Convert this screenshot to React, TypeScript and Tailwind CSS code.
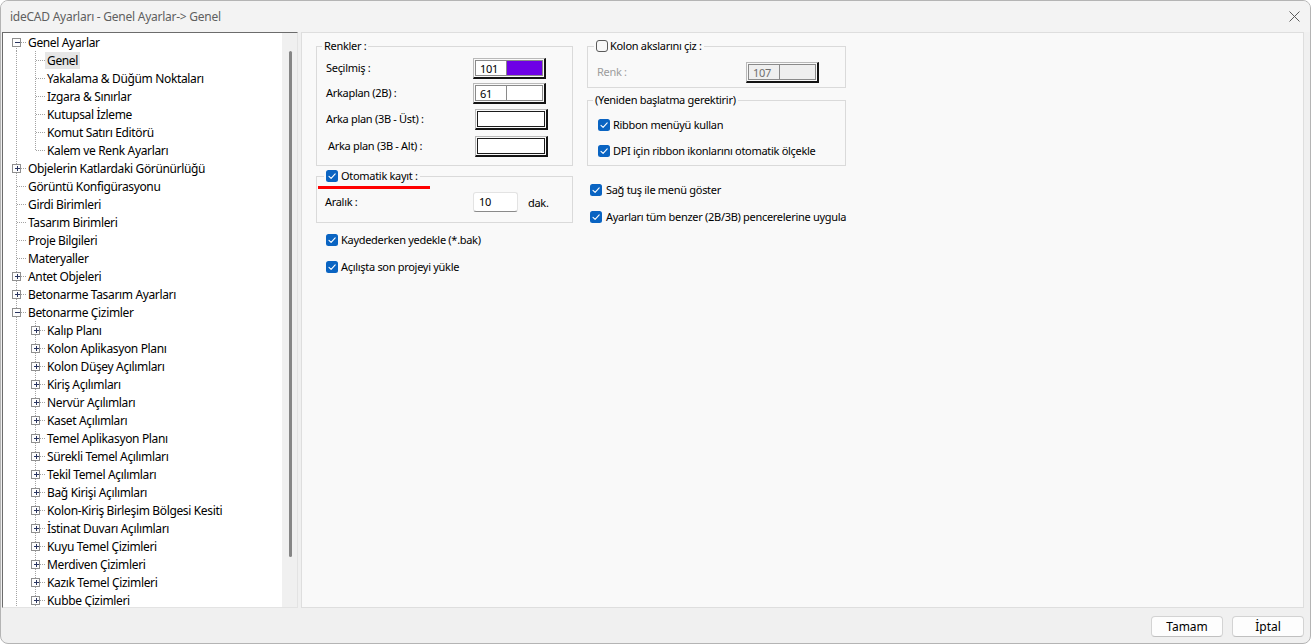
import React from "react";

type Node = {
  label: string;
  level: 0 | 1;
  box?: "+" | "-";
  selected?: boolean;
  first?: boolean;
  lastChild?: boolean;
};

const CHILDREN_1 = [
  "Genel",
  "Yakalama & Düğüm Noktaları",
  "Izgara & Sınırlar",
  "Kutupsal İzleme",
  "Komut Satırı Editörü",
  "Kalem ve Renk Ayarları",
];

const CHILDREN_2 = [
  "Kalıp Planı",
  "Kolon Aplikasyon Planı",
  "Kolon Düşey Açılımları",
  "Kiriş Açılımları",
  "Nervür Açılımları",
  "Kaset Açılımları",
  "Temel Aplikasyon Planı",
  "Sürekli Temel Açılımları",
  "Tekil Temel Açılımları",
  "Bağ Kirişi Açılımları",
  "Kolon-Kiriş Birleşim Bölgesi Kesiti",
  "İstinat Duvarı Açılımları",
  "Kuyu Temel Çizimleri",
  "Merdiven Çizimleri",
  "Kazık Temel Çizimleri",
  "Kubbe Çizimleri",
];

const TREE: Node[] = [
  { label: "Genel Ayarlar", level: 0, box: "-", first: true },
  ...CHILDREN_1.map((label, i) => ({
    label,
    level: 1 as const,
    selected: i === 0,
    lastChild: i === CHILDREN_1.length - 1,
  })),
  { label: "Objelerin Katlardaki Görünürlüğü", level: 0, box: "+" },
  { label: "Görüntü Konfigürasyonu", level: 0 },
  { label: "Girdi Birimleri", level: 0 },
  { label: "Tasarım Birimleri", level: 0 },
  { label: "Proje Bilgileri", level: 0 },
  { label: "Materyaller", level: 0 },
  { label: "Antet Objeleri", level: 0, box: "+" },
  { label: "Betonarme Tasarım Ayarları", level: 0, box: "+" },
  { label: "Betonarme Çizimler", level: 0, box: "-" },
  ...CHILDREN_2.map((label) => ({ label, level: 1 as const, box: "+" as const })),
];

function Expander({ cx, sign }: { cx: number; sign: "+" | "-" }) {
  return (
    <g shapeRendering="crispEdges">
      <rect x={cx - 4} y={5.5} width={8} height={8} fill="#fdfdfd" stroke="#8f8f8f" />
      <line x1={cx - 2} y1={9.5} x2={cx + 3} y2={9.5} stroke="#2a3560" />
      {sign === "+" && <line x1={cx + 0.5} y1={7} x2={cx + 0.5} y2={12} stroke="#2a3560" />}
    </g>
  );
}

function Connector({ node }: { node: Node }) {
  const w = node.level === 0 ? 23 : 42;
  return (
    <svg width={w} height={18} className="shrink-0">
      <g stroke="#a3a3a3" strokeDasharray="1 1" shapeRendering="crispEdges">
        <line x1={13.5} y1={node.first ? 9 : 0} x2={13.5} y2={18} />
        {node.level === 0 ? (
          <line x1={14} y1={9.5} x2={23} y2={9.5} />
        ) : (
          <>
            <line x1={32.5} y1={0} x2={32.5} y2={node.lastChild ? 10 : 18} />
            <line x1={33} y1={9.5} x2={42} y2={9.5} />
          </>
        )}
      </g>
      {node.box && <Expander cx={node.level === 0 ? 13.5 : 32.5} sign={node.box} />}
    </svg>
  );
}

function Check({ checked = true }: { checked?: boolean }) {
  if (!checked) {
    return <span className="w-[12px] h-[12px] shrink-0 rounded-[3px] border border-[#5a5a5a] bg-[#f7f7f7]" />;
  }
  return (
    <svg width={12} height={12} className="shrink-0">
      <rect x={0} y={0} width={12} height={12} rx={2.5} fill="#0a64c2" />
      <path d="M3 6.3 L5.1 8.3 L9.2 3.9" fill="none" stroke="#fff" strokeWidth={1.1} strokeLinecap="round" strokeLinejoin="round" />
    </svg>
  );
}

function CheckRow({ label, className = "" }: { label: string; className?: string }) {
  return (
    <div className={`h-[18px] flex items-center gap-[3px] whitespace-nowrap ${className}`}>
      <Check />
      <span>{label}</span>
    </div>
  );
}

function ColorBox({ value, fill, disabled }: { value?: string; fill?: string; disabled?: boolean }) {
  return (
    <div className="w-[73px] h-[21px] flex border-t border-l border-[#b9b9b9] border-r-2 border-b-2 border-r-[#141414] border-b-[#141414] p-[1px]">
      {value ? (
        <div className={`flex-1 flex border border-[#8a8a8a] ${disabled ? "bg-[#efefef]" : "bg-white"}`}>
          <span className={`w-[31px] pl-[4px] leading-[15px] border-r border-[#8a8a8a] ${disabled ? "text-[#6e6e6e]" : ""}`}>
            {value}
          </span>
          <span className="flex-1" style={{ background: fill }} />
        </div>
      ) : (
        <div className="flex-1 bg-white border border-[#1c1c1c]" />
      )}
    </div>
  );
}

function GroupBox({
  legend,
  className = "",
  legendClass = "",
  children,
}: {
  legend: React.ReactNode;
  className?: string;
  legendClass?: string;
  children: React.ReactNode;
}) {
  return (
    <fieldset className={`border border-[#dadada] flex flex-col ${className}`}>
      <legend className={`h-[16px] leading-[16px] px-[2px] ${legendClass}`}>{legend}</legend>
      {children}
    </fieldset>
  );
}

export default function App() {
  return (
    <div className="w-[1311px] h-[644px] flex flex-col bg-[#f0f0f0] border border-[#b4b4b4] rounded-[8px] overflow-hidden text-[12px] text-black font-['Noto_Sans','Liberation_Sans',sans-serif]">
      {/* title bar */}
      <div className="h-[31px] shrink-0 flex items-center justify-between pl-[9px] pr-[10px] bg-[#f3f3f3]">
        <span className="text-[12px] tracking-[-0.25px] text-[#5f5f5f]">ideCAD Ayarları - Genel Ayarlar-&gt; Genel</span>
        <svg width={11} height={11} viewBox="0 0 11 11">
          <path d="M0.5 0.5 L10.5 10.5 M10.5 0.5 L0.5 10.5" stroke="#5b5b5b" strokeWidth={1} />
        </svg>
      </div>

      <div className="h-[576px] shrink-0 flex pl-[1px] pr-[6px] gap-[3px]">
        {/* tree */}
        <div className="w-[296px] flex border-t border-l border-[#6c6c6c] border-r border-b border-r-[#e3e3e3] border-b-[#e3e3e3] bg-white">
          <div className="flex-1 overflow-hidden tracking-[-0.35px]">
            {TREE.map((n) => (
              <div key={n.label} className="h-[18px] flex items-center whitespace-nowrap">
                <Connector node={n} />
                <span className={`px-[2px] leading-[17px] ${n.selected ? "bg-[#e6e6e6]" : ""}`}>{n.label}</span>
              </div>
            ))}
          </div>
          <div className="w-[15px] bg-[#f0f0f0] pl-[7px]">
            <div className="mt-[18px] w-[3px] h-[506px] rounded-full bg-[#868686]" />
          </div>
        </div>

        {/* settings panel */}
        <div className="flex-1 flex border border-[#dedede] bg-[#f9f9f9] text-[11px] tracking-[-0.3px]">
          {/* left column */}
          <div className="ml-[14px] w-[257px] flex flex-col">
            <GroupBox legend="Renkler :" className="mt-[5px] pb-[8px]" legendClass="ml-[5px]">
              <div className="mt-[4px] h-[21px] flex items-center">
                <span className="w-[156px] pl-[9px]">Seçilmiş :</span>
                <ColorBox value="101" fill="#6e00e6" />
              </div>
              <div className="mt-[4px] h-[21px] flex items-center">
                <span className="w-[156px] pl-[9px]">Arkaplan (2B) :</span>
                <ColorBox value="61" fill="#ffffff" />
              </div>
              <div className="mt-[5px] h-[21px] flex items-center">
                <span className="w-[158px] pl-[9px]">Arka plan (3B - Üst) :</span>
                <ColorBox />
              </div>
              <div className="mt-[6px] h-[21px] flex items-center">
                <span className="w-[158px] pl-[11px]">Arka plan (3B - Alt) :</span>
                <ColorBox />
              </div>
            </GroupBox>

            <GroupBox
              className="mt-[2px] pb-[10px]"
              legendClass="ml-[7px] relative"
              legend={
                <span className="flex items-center gap-[3px]">
                  <Check />
                  <span>Otomatik kayıt :</span>
                  <span className="absolute left-[-6px] top-[18px] w-[112px] h-[3px] bg-[#ff0000]" />
                </span>
              }
            >
              <div className="mt-[8px] h-[20px] flex items-center">
                <span className="w-[156px] pl-[8px]">Aralık :</span>
                <div className="w-[45px] h-[20px] flex items-center pl-[5px] bg-white border border-[#e3e3e3] border-b-[#8a8a8a] rounded-[3px]">
                  10
                </div>
                <span className="ml-[10px] pt-[2px]">dak.</span>
              </div>
            </GroupBox>

            <CheckRow label="Kaydederken yedekle (*.bak)" className="mt-[8px] pl-[10px]" />
            <CheckRow label="Açılışta son projeyi yükle" className="mt-[9px] pl-[10px]" />
          </div>

          {/* right column */}
          <div className="ml-[14px] w-[259px] flex flex-col">
            <GroupBox
              className="mt-[5px] pb-[4px]"
              legendClass="ml-[6px]"
              legend={
                <span className="flex items-center gap-[2px]">
                  <Check checked={false} />
                  <span>Kolon akslarını çiz :</span>
                </span>
              }
            >
              <div className="mt-[8px] h-[21px] flex items-center">
                <span className="w-[158px] pl-[9px] text-[#9c9c9c]">Renk :</span>
                <div className="w-[75px]">
                  <ColorBox value="107" fill="#efefef" disabled />
                </div>
              </div>
            </GroupBox>

            <GroupBox legend="(Yeniden başlatma gerektirir)" className="mt-[4px] pb-[5px]" legendClass="ml-[5px]">
              <CheckRow label="Ribbon menüyü kullan" className="mt-[8px] pl-[10px]" />
              <CheckRow label="DPI için ribbon ikonlarını otomatik ölçekle" className="mt-[8px] pl-[10px]" />
            </GroupBox>

            <CheckRow label="Sağ tuş ile menü göster" className="mt-[15px] pl-[3px] gap-[4px]" />
            <CheckRow label="Ayarları tüm benzer (2B/3B) pencerelerine uygula" className="mt-[9px] pl-[3px] gap-[4px]" />
          </div>
        </div>
      </div>

      {/* bottom buttons */}
      <div className="flex-1 flex items-start justify-end gap-[9px] pt-[8px] pr-[6px]">
        <button className="w-[72px] h-[21px] bg-[#fdfdfd] border border-[#d3d3d3] border-b-[#c0c0c0] rounded-[4px] leading-[19px]">
          Tamam
        </button>
        <button className="w-[72px] h-[21px] bg-[#fdfdfd] border border-[#d3d3d3] border-b-[#c0c0c0] rounded-[4px] leading-[19px]">
          İptal
        </button>
      </div>
    </div>
  );
}
